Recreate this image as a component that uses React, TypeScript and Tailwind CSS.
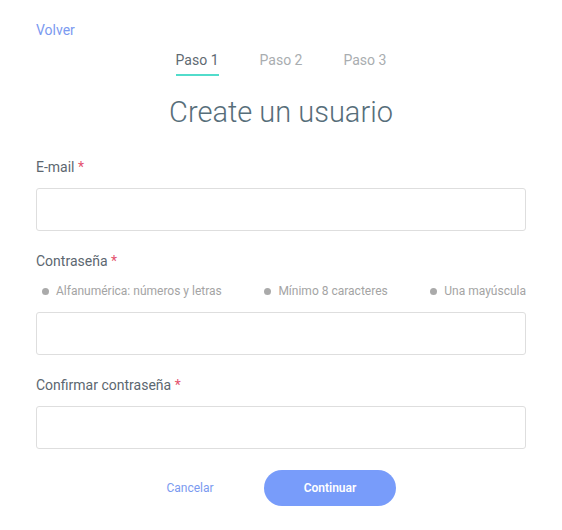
import React from "react";

const steps = ["Paso 1", "Paso 2", "Paso 3"];
const hints = ["Alfanumérica: números y letras", "Mínimo 8 caracteres", "Una mayúscula"];

function Label({ text, className = "" }: { text: string; className?: string }) {
  return (
    <label className={`block text-[14px] leading-4 text-[#5c6770] ${className}`}>
      {text} <span className="text-[#e4536e]">*</span>
    </label>
  );
}

function Field({ type = "text", className = "" }: { type?: string; className?: string }) {
  return (
    <input
      type={type}
      className={`block h-[43px] w-full rounded-[3px] border border-[#dedede] bg-white px-3 text-[13px] outline-none ${className}`}
    />
  );
}

export default function App() {
  return (
    <div
      className="min-h-[530px] bg-white px-9 pt-[22px]"
      style={{ fontFamily: "Roboto, 'Noto Sans', sans-serif" }}
    >
      <a className="block text-[14px] leading-4 text-[#7b9af0]">Volver</a>

      <nav className="mt-3 flex justify-center gap-[41px]">
        {steps.map((step, i) => (
          <div
            key={step}
            className={`pb-1 text-[14px] leading-5 ${
              i === 0
                ? "border-b-2 border-[#52dccb] text-[#5f6a72]"
                : "border-b-2 border-transparent text-[#a9adb0]"
            }`}
          >
            {step}
          </div>
        ))}
      </nav>

      <h1 className="mt-[18px] text-center text-[29px] font-light leading-9 text-[#576e7a]">
        Create un usuario
      </h1>

      <form className="mt-[29px]" onSubmit={(e) => e.preventDefault()}>
        <Label text="E-mail" />
        <Field className="mt-[13px]" />

        <Label text="Contraseña" className="mt-[22px]" />
        <ul className="mt-[14px] flex justify-between pl-[6px] text-[12px] leading-4 text-[#a4a4a4]">
          {hints.map((hint) => (
            <li key={hint} className="flex items-center gap-[7px]">
              <span className="h-[7px] w-[7px] rounded-full bg-[#aaaaaa]" />
              {hint}
            </li>
          ))}
        </ul>
        <Field type="password" className="mt-[13px]" />

        <Label text="Confirmar contraseña" className="mt-[22px]" />
        <Field type="password" className="mt-[13px]" />

        <div className="mt-[21px] flex gap-2 pl-[88px]">
          <button type="button" className="h-9 w-[132px] text-[12px] text-[#7b9af0]">
            Cancelar
          </button>
          <button
            type="submit"
            className="h-9 w-[132px] rounded-full bg-[#789cfa] text-[12px] font-semibold text-white"
          >
            Continuar
          </button>
        </div>
      </form>
    </div>
  );
}
